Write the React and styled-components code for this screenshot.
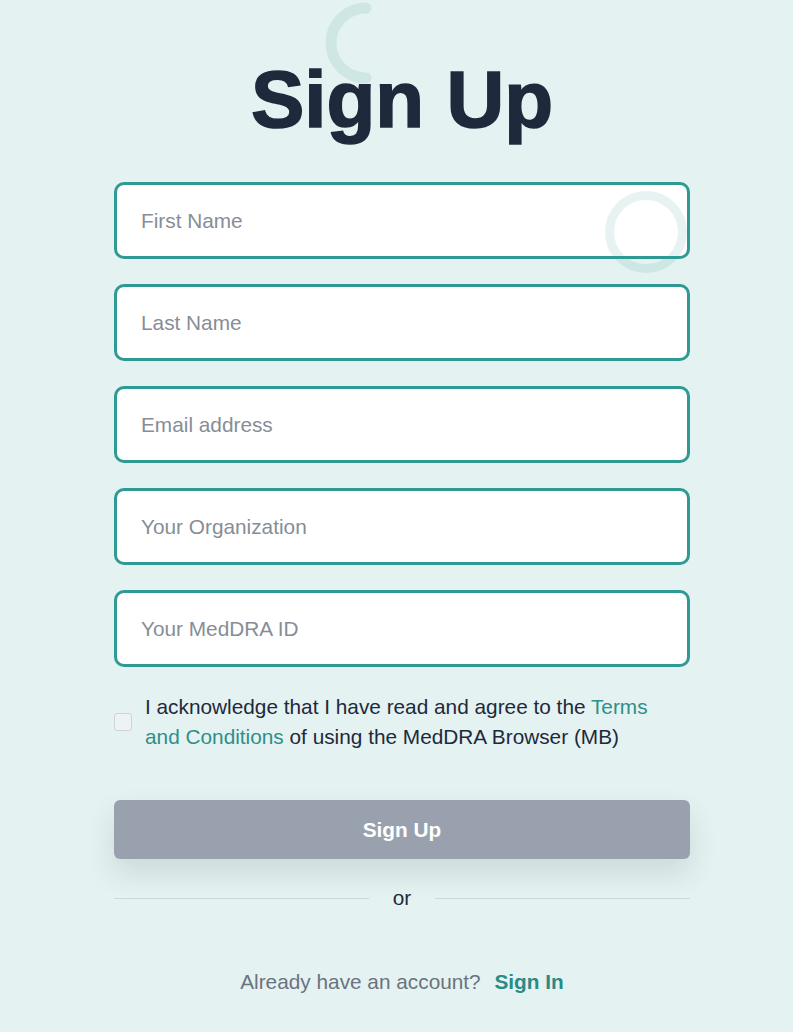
import React from "react";
import styled, { createGlobalStyle } from "styled-components";

const GlobalStyle = createGlobalStyle`
  html, body { margin: 0; padding: 0; background: #e4f2f1; }
  body { font-family: "Liberation Sans", Arial, sans-serif; }
  * { box-sizing: border-box; }
`;

const Page = styled.div`
  position: relative;
  min-height: 1032px;
  background: #e4f2f1;
  padding: 60px 0 0 114px;
  overflow: hidden;
`;

const Column = styled.div`
  width: 576px;
  display: flex;
  flex-direction: column;
`;

const Title = styled.h1`
  margin: 0 0 42px;
  font-family: "Liberation Sans", Arial, sans-serif;
  font-weight: 900;
  font-size: 80px;
  line-height: 80px;
  color: #1e293b;
  text-align: center;
  -webkit-text-stroke: 1.6px #1e293b;
`;

const Fields = styled.div`
  display: flex;
  flex-direction: column;
  gap: 25px;
`;

const Input = styled.input`
  width: 100%;
  height: 77px;
  border: 3px solid #2f9a94;
  border-radius: 10px;
  background: #ffffff;
  padding: 0 24px;
  font-family: "Liberation Sans", Arial, sans-serif;
  font-size: 20.8px;
  color: #1e293b;
  outline: none;
  &::placeholder { color: #878d96; }
`;

const AgreeRow = styled.label`
  display: flex;
  align-items: center;
  gap: 13px;
  margin-top: 25px;
  font-size: 20.8px;
  line-height: 30px;
  color: #1e293b;
`;

const AgreeText = styled.span`
  max-width: 530px;
`;

const Box = styled.span`
  flex: none;
  width: 18px;
  height: 18px;
  border: 1.5px solid #cfd4d8;
  border-radius: 3px;
  background: #eef2f3;
`;

const Link = styled.a`
  color: #2f8f89;
  text-decoration: none;
`;

const SubmitButton = styled.button`
  margin-top: 48px;
  width: 100%;
  height: 59px;
  border: none;
  border-radius: 6px;
  background: #9aa1ae;
  color: #ffffff;
  font-family: "Liberation Sans", Arial, sans-serif;
  font-weight: 700;
  font-size: 20.8px;
  box-shadow: 0 14px 28px rgba(60, 80, 80, 0.14);
`;

const Divider = styled.div`
  margin-top: 27px;
  display: flex;
  align-items: center;
  gap: 24px;
  font-size: 20.8px;
  line-height: 24px;
  color: #1e293b;
  &::before, &::after {
    content: "";
    flex: 1;
    height: 1px;
    background: #cbd9d9;
  }
`;

const Footer = styled.p`
  margin: 57px 0 0;
  text-align: center;
  font-size: 20.8px;
  line-height: 30px;
  color: #6b7280;
`;

const SignIn = styled.a`
  margin-left: 8px;
  color: #2a8a85;
  font-weight: 700;
  text-decoration: none;
`;

const Deco = styled.svg`
  position: absolute;
  pointer-events: none;
  left: ${(p) => p.$x}px;
  top: ${(p) => p.$y}px;
`;

const ringColor = "rgba(47,154,148,0.12)";

export default function App() {
  return (
    <>
      <GlobalStyle />
      <Page>
        <Column>
          <Title>Sign Up</Title>
          <Fields>
            <Input placeholder="First Name" />
            <Input placeholder="Last Name" />
            <Input placeholder="Email address" />
            <Input placeholder="Your Organization" />
            <Input placeholder="Your MedDRA ID" />
          </Fields>
          <AgreeRow>
            <Box />
            <AgreeText>
              I acknowledge that I have read and agree to the{" "}
              <Link href="#">Terms and Conditions</Link> of using the MedDRA
              Browser (MB)
            </AgreeText>
          </AgreeRow>
          <SubmitButton type="button">Sign Up</SubmitButton>
          <Divider>or</Divider>
          <Footer>
            Already have an account? <SignIn href="#">Sign In</SignIn>
          </Footer>
        </Column>
        <Deco $x={316} $y={0} width="64" height="90" viewBox="0 0 64 90">
          <path
            d="M 50 8 A 35 35 0 0 0 50 78"
            fill="none"
            stroke={ringColor}
            strokeWidth="11"
            strokeLinecap="round"
          />
        </Deco>
        <Deco $x={600} $y={186} width="92" height="92" viewBox="0 0 92 92">
          <circle cx="46" cy="46" r="36.5" fill="none" stroke={ringColor} strokeWidth="9" />
        </Deco>
      </Page>
    </>
  );
}
